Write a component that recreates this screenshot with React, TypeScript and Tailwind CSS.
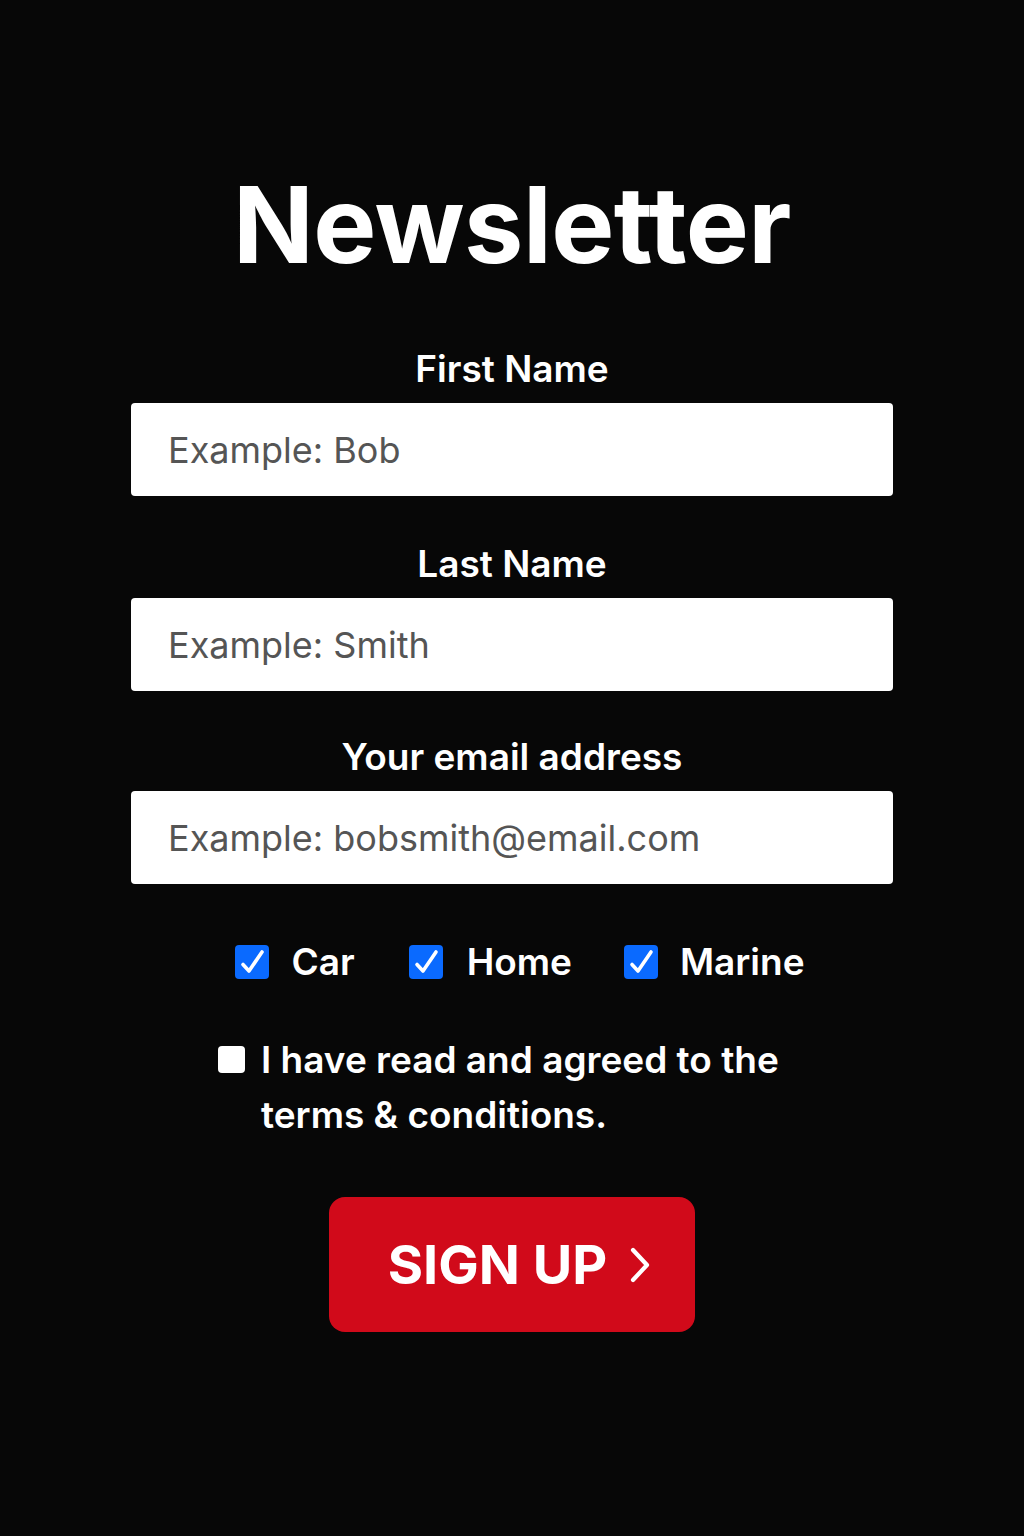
import React from "react";

function Check({ checked }: { checked: boolean }) {
  return (
    <span className="flex h-[34px] w-[34px] items-center justify-center rounded-[4px] bg-[#0a6aff]">
      {checked && (
        <svg viewBox="0 0 34 34" className="h-[34px] w-[34px]" fill="none" stroke="white" strokeWidth="3.6" strokeLinecap="round" strokeLinejoin="round">
          <path d="M8 19.5L14 26L27 7" />
        </svg>
      )}
    </span>
  );
}

function Field({ label, placeholder, mt }: { label: string; placeholder: string; mt: string }) {
  return (
    <div className={`flex w-full flex-col items-center ${mt}`}>
      <label className="text-[37px] font-semibold leading-[40px] text-white">{label}</label>
      <input
        className="mt-[14px] h-[93px] w-full rounded-[4px] bg-white px-[37px] text-[36px] font-normal text-[#333] outline-none placeholder:text-[#555]"
        placeholder={placeholder}
      />
    </div>
  );
}

export default function App() {
  return (
    <div className="min-h-[1536px] w-full bg-[#070707] font-['Inter','Liberation_Sans',sans-serif]">
      <div className="mx-auto flex w-[762px] flex-col items-center pt-[165px]">
        <h1 className="text-[106px] font-bold leading-[120px] tracking-[-0.5px] text-white">Newsletter</h1>
        <Field label="First Name" placeholder="Example: Bob" mt="mt-[64px]" />
        <Field label="Last Name" placeholder="Example: Smith" mt="mt-[48px]" />
        <Field label="Your email address" placeholder="Example: bobsmith@email.com" mt="mt-[46px]" />
        <div className="ml-[16px] mt-[56px] flex items-center text-[37px] font-semibold leading-[44px] text-white">
          <Check checked />
          <span className="ml-[22px]">Car</span>
          <span className="ml-[54px]"><Check checked /></span>
          <span className="ml-[24px]">Home</span>
          <span className="ml-[52px]"><Check checked /></span>
          <span className="ml-[22px]">Marine</span>
        </div>
        <div className="mt-[48px] flex w-[580px] items-start pl-[4px] text-[37px] font-semibold leading-[55px] text-white">
          <span className="ml-[-8px] mt-[14px] h-[27px] w-[27px] shrink-0 rounded-[4px] bg-white" />
          <span className="ml-[16px]">I have read and agreed to the terms &amp; conditions.</span>
        </div>
        <button className="mt-[55px] flex h-[135px] w-[366px] items-center justify-center gap-[22px] rounded-[16px] bg-[#d10a1a] pl-[15px] text-[54px] font-bold text-white">
          <span>SIGN UP</span>
          <svg viewBox="0 0 22 36" className="h-[36px] w-[22px]" fill="none" stroke="white" strokeWidth="4.2" strokeLinecap="round" strokeLinejoin="round">
            <path d="M4 3L18 18L4 33" />
          </svg>
        </button>
      </div>
    </div>
  );
}
